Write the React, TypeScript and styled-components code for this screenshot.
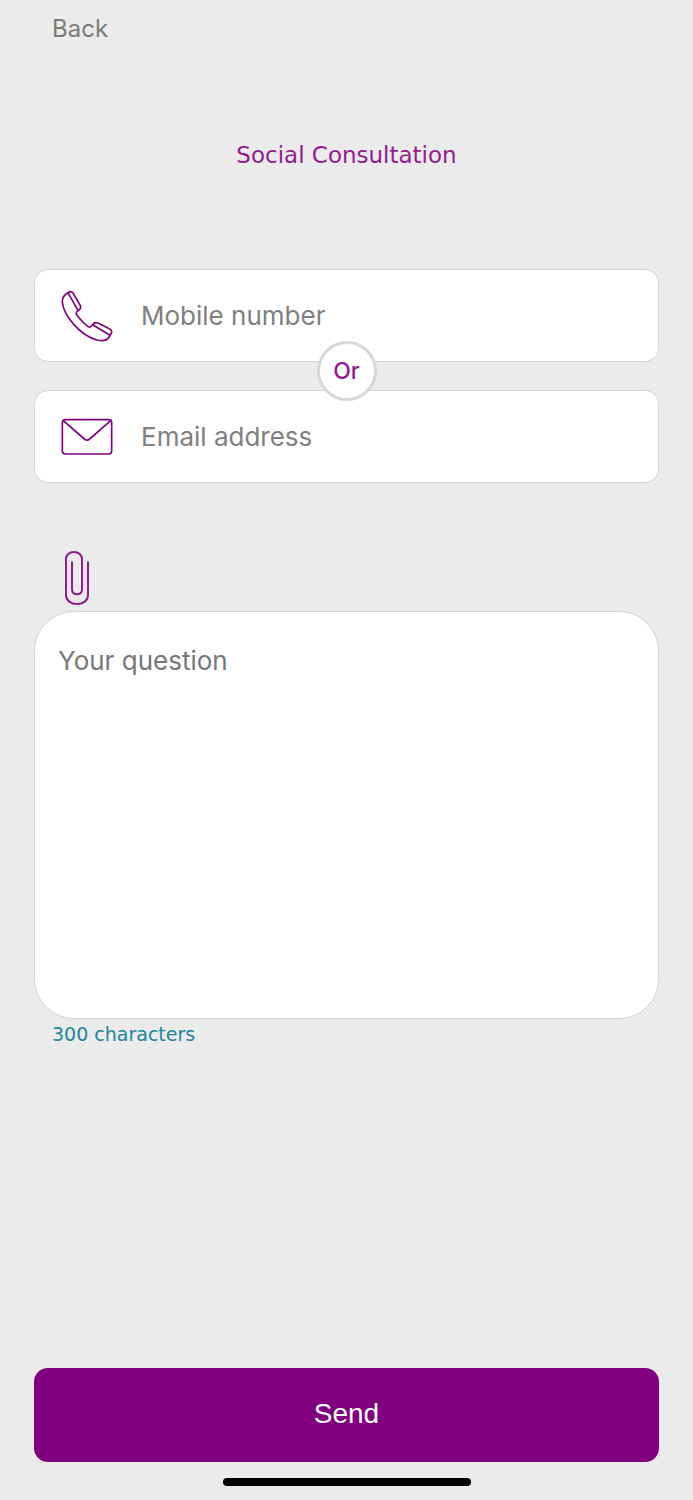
import React, { useState } from "react";
import styled, { createGlobalStyle } from "styled-components";

const GlobalStyle = createGlobalStyle`
  * { box-sizing: border-box; }
  body {
    margin: 0;
    background: #ebebeb;
    font-family: Inter, "Liberation Sans", sans-serif;
  }
`;

const Page = styled.div`
  display: flex;
  flex-direction: column;
  min-height: 100vh;
  padding: 8px 34px 14px;
`;

const BackButton = styled.button`
  align-self: flex-start;
  margin-left: 18px;
  padding: 0;
  border: 0;
  background: none;
  color: #7b7b7b;
  font: 400 24px/42px Inter, "Liberation Sans", sans-serif;
`;

const Title = styled.h1`
  margin: 85px 0 94px;
  color: #921c8f;
  font: 400 23px/40px "DejaVu Sans", sans-serif;
  text-align: center;
`;

const Form = styled.form`
  display: flex;
  flex: 1;
  flex-direction: column;
`;

const Contacts = styled.div`
  position: relative;
  display: flex;
  flex-direction: column;
  gap: 28px;
`;

const Field = styled.label`
  display: flex;
  align-items: center;
  gap: 28px;
  height: 93px;
  padding: 0 26px;
  border: 1px solid #d5d5d5;
  border-radius: 14px;
  background: #fff;
`;

const FieldInput = styled.input`
  flex: 1;
  min-width: 0;
  padding: 0;
  border: 0;
  outline: 0;
  background: none;
  color: #333;
  font: 400 26px/40px Inter, "Liberation Sans", sans-serif;
  &::placeholder { color: #808080; opacity: 1; }
`;

const OrBadge = styled.span`
  position: absolute;
  top: 72px;
  left: 50%;
  display: flex;
  align-items: center;
  justify-content: center;
  width: 60px;
  height: 60px;
  transform: translateX(-50%);
  border: 3px solid #d8d8d8;
  border-radius: 50%;
  background: #fff;
  color: #921c8f;
  font: 500 23px/30px Inter, "Liberation Sans", sans-serif;
`;

const AttachButton = styled.button`
  display: flex;
  align-self: flex-start;
  margin: 68px 0 6px 30px;
  padding: 0;
  border: 0;
  background: none;
`;

const Question = styled.textarea`
  display: block;
  width: 100%;
  height: 408px;
  padding: 29px 23px;
  border: 1px solid #d5d5d5;
  border-radius: 40px;
  outline: 0;
  resize: none;
  background: #fff;
  color: #333;
  font: 400 26px/40px Inter, "Liberation Sans", sans-serif;
  &::placeholder { color: #777; opacity: 1; }
`;

const Counter = styled.p`
  margin: 0 0 40px 18px;
  color: #2385a0;
  font: 400 19px/30px "DejaVu Sans", sans-serif;
`;

const SendButton = styled.button`
  height: 94px;
  margin-top: auto;
  padding: 0 0 2px;
  border: 0;
  border-radius: 14px;
  background: #800080;
  color: #fff;
  font: 400 28px/40px "Liberation Sans", sans-serif;
`;

const HomeIndicator = styled.div`
  align-self: center;
  width: 248px;
  height: 8px;
  margin-top: 16px;
  border-radius: 4px;
  background: #000;
`;

const Icon = styled.svg<{ $color?: string }>`
  flex: none;
  fill: none;
  stroke: ${({ $color }) => $color ?? "#800080"};
  stroke-linecap: round;
  stroke-linejoin: round;
`;

const PhoneIcon = () => (
  <Icon width="52" height="52" viewBox="123 90 156 156" strokeWidth="5" aria-hidden="true">
    <path d="M144 98C133 104 126 112 127 126C130 166 181 227 231 240C255 246 265 239 270 226" />
    <path d="M144 98Q153 91 159 99L181 137Q184 144 178 149L174 152Z" />
    <path d="M174 152C166 158 168 163 172 167C182 180 192 190 203 199C208 203 213 201 218 194" />
    <path d="M218 194Q224 185 234 189L268 206Q278 211 274 220L270 226Z" />
  </Icon>
);

const MailIcon = () => (
  <Icon width="52" height="38" viewBox="123 115 156 114" strokeWidth="5" aria-hidden="true">
    <rect x="127" y="120" width="148" height="103" rx="9" />
    <path d="M130 123L193 178Q201 185 209 178L272 123" />
  </Icon>
);

const ClipIcon = () => (
  <Icon $color="#921c8f" width="26" height="54" viewBox="132 31 78 162" strokeWidth="6" aria-hidden="true">
    <path d="M204 65V163C204 180 189 190 171 190C153 190 138 180 138 163V55C138 42 149 34 162 34C175 34 186 42 186 55V146C186 156 179 161 171 161C162 161 156 156 156 146V65" />
  </Icon>
);

export default function App() {
  const [question, setQuestion] = useState("");
  return (
    <>
      <GlobalStyle />
      <Page>
        <BackButton type="button">Back</BackButton>
        <Title>Social Consultation</Title>
        <Form onSubmit={(event) => event.preventDefault()}>
          <Contacts>
            <Field>
              <PhoneIcon />
              <FieldInput type="tel" placeholder="Mobile number" aria-label="Mobile number" />
            </Field>
            <Field>
              <MailIcon />
              <FieldInput type="email" placeholder="Email address" aria-label="Email address" />
            </Field>
            <OrBadge>Or</OrBadge>
          </Contacts>
          <AttachButton type="button" aria-label="Attach a file">
            <ClipIcon />
          </AttachButton>
          <Question
            placeholder="Your question"
            aria-label="Your question"
            maxLength={300}
            value={question}
            onChange={(event) => setQuestion(event.target.value)}
          />
          <Counter>{300 - question.length} characters</Counter>
          <SendButton type="submit">Send</SendButton>
        </Form>
        <HomeIndicator />
      </Page>
    </>
  );
}
